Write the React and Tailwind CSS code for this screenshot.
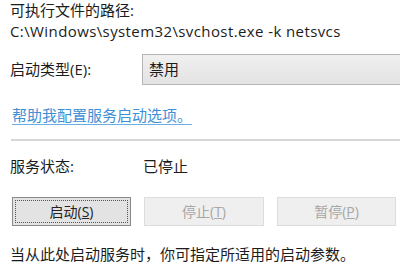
export default function App() {
  const font = { fontFamily: '"Segoe UI", "Open Sans", "Noto Sans CJK SC", sans-serif' }
  return (
    <div className="w-[400px] h-[271px] overflow-hidden bg-white text-[#1c1c1c] text-[15px] leading-none" style={font}>
      <div className="pl-[10px] pt-[3px]">
        <div className="h-[15px] flex items-center">可执行文件的路径:</div>
        <div className="h-[15px] mt-[6px] flex items-center text-[15px] tracking-[0.4px]">C:\Windows\system32\svchost.exe -k netsvcs</div>
      </div>

      <div className="flex items-center mt-[15px]">
        <div className="w-[142px] pl-[10px]">启动类型(E):</div>
        <div className="flex-1 h-[31px] border border-[#b5b5b5] border-r-0 bg-gradient-to-b from-[#f0f0f0] to-[#e3e3e3] flex items-center pl-[6px] text-[15px]">
          禁用
        </div>
      </div>

      <div className="mt-[23px] pl-[12px]">
        <span className="text-[#3d8fd6] underline underline-offset-[3px] decoration-[#6aaee6]">帮助我配置服务启动选项。</span>
      </div>

      <div className="ml-[11px] mt-[16px] h-[2px] bg-[#d6d6d6]" />

      <div className="flex items-center mt-[18px] h-[15px]">
        <div className="w-[143px] pl-[10px]">服务状态:</div>
        <div>已停止</div>
      </div>

      <div className="flex mt-[23px] pl-[12px] gap-[13px] text-[14px]">
        <div className="w-[119px] h-[29px] border border-[#8a8a8a] bg-[#e3e3e3] p-[2px]">
          <div className="w-full h-full border border-dotted border-[#555] flex items-center justify-center text-[#222]">启动(<span className="underline">S</span>)</div>
        </div>
        <div className="w-[120px] h-[29px] border border-[#dcdcdc] bg-[#efefef] flex items-center justify-center text-[#a6a6a6]">停止(<span className="underline">T</span>)</div>
        <div className="w-[119px] h-[29px] border border-[#dcdcdc] bg-[#efefef] flex items-center justify-center text-[#a6a6a6]">暂停(<span className="underline">P</span>)</div>
      </div>

      <div className="pl-[10px] mt-[21px]">当从此处启动服务时，你可指定所适用的启动参数。</div>
    </div>
  )
}
